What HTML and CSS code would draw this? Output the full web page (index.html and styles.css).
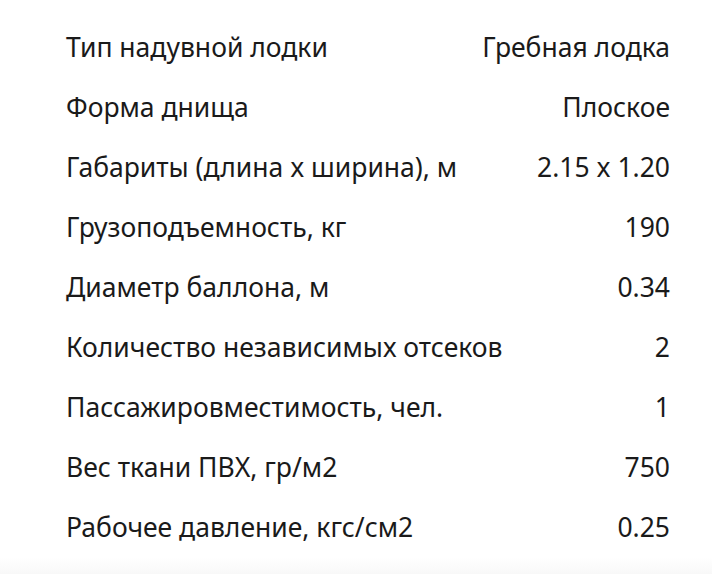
FILE: index.html
```html
<!DOCTYPE html>
<html lang="ru">
<head>
<meta charset="utf-8">
<link rel="stylesheet" href="styles.css">
</head>
<body>
<div class="specs">
  <div class="row"><span class="name">Тип надувной лодки</span><span class="val">Гребная лодка</span></div>
  <div class="row"><span class="name">Форма днища</span><span class="val">Плоское</span></div>
  <div class="row"><span class="name">Габариты (длина x ширина), м</span><span class="val">2.15 x 1.20</span></div>
  <div class="row"><span class="name">Грузоподъемность, кг</span><span class="val">190</span></div>
  <div class="row"><span class="name">Диаметр баллона, м</span><span class="val">0.34</span></div>
  <div class="row"><span class="name">Количество независимых отсеков</span><span class="val">2</span></div>
  <div class="row"><span class="name">Пассажировместимость, чел.</span><span class="val">1</span></div>
  <div class="row"><span class="name">Вес ткани ПВХ, гр/м2</span><span class="val">750</span></div>
  <div class="row"><span class="name">Рабочее давление, кгс/см2</span><span class="val">0.25</span></div>
</div>
<div class="fade"></div>
</body>
</html>
```
FILE: styles.css
```css
html, body {
  margin: 0;
  padding: 0;
  background: #ffffff;
}
body {
  width: 712px;
  height: 574px;
  overflow: hidden;
  font-family: "Noto Sans", "Open Sans", sans-serif;
  color: #1a1a1a;
}
.specs {
  padding: 17px 42px 0 66px;
}
.row {
  height: 60px;
  display: flex;
  justify-content: space-between;
  align-items: center;
  font-size: 26.5px;
  line-height: 32px;
}
.fade {
  height: 17px;
  background: linear-gradient(#ffffff, #f8f8f8);
}
```
